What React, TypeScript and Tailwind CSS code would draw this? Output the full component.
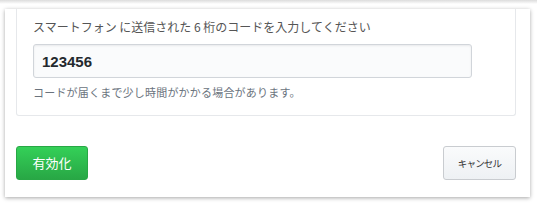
export default function App() {
  const jp = { fontFamily: '"Noto Sans CJK JP", "Liberation Sans", sans-serif' };
  return (
    <div className="relative flex h-[207px] w-[537px] flex-col overflow-hidden bg-white">
      <div className="h-[4px] w-full bg-gradient-to-b from-[#dcdcdc] to-white" />
      <div className="ml-[5px] mt-[5px] flex h-[188px] w-[525px] flex-col bg-white px-[11px] shadow-[0_1px_4px_rgba(0,0,0,0.35)]">
        <div className="flex h-[107px] w-[500px] flex-col rounded-b-[3px] border border-t-0 border-[#e6e8eb] pl-[16px] pt-[8px]">
          <p className="text-[12px] leading-[20px] text-[#555]" style={jp}>
            スマートフォン に送信された 6 桁のコードを入力してください
          </p>
          <input
            readOnly
            value="123456"
            className="mt-[7px] h-[34px] w-[439px] rounded-[3px] border border-[#d1d5da] bg-[#fafbfc] px-[8px] text-[15px] font-semibold text-[#24292e] shadow-[inset_0_1px_2px_rgba(27,31,35,0.075)] outline-none"
            style={{ fontFamily: '"Liberation Sans", Arial, sans-serif' }}
          />
          <p className="mt-[6px] text-[11px] leading-[16px] tracking-[0.2px] text-[#6a737d]" style={jp}>
            コードが届くまで少し時間がかかる場合があります。
          </p>
        </div>
        <div className="mt-[30px] flex w-[500px] items-center justify-between">
          <button
            className="flex h-[34px] w-[72px] items-center justify-center rounded-[3px] border border-[#28a745] bg-gradient-to-b from-[#34d058] to-[#28a745] text-[13px] text-white"
            style={jp}
          >
            有効化
          </button>
          <button
            className="flex h-[34px] w-[73px] items-center justify-center rounded-[3px] border border-[#c9ccd0] bg-gradient-to-b from-[#fafbfc] to-[#eef1f4] text-[9.5px] tracking-[-0.8px] text-[#333]"
            style={jp}
          >
            キャンセル
          </button>
        </div>
      </div>
    </div>
  );
}
